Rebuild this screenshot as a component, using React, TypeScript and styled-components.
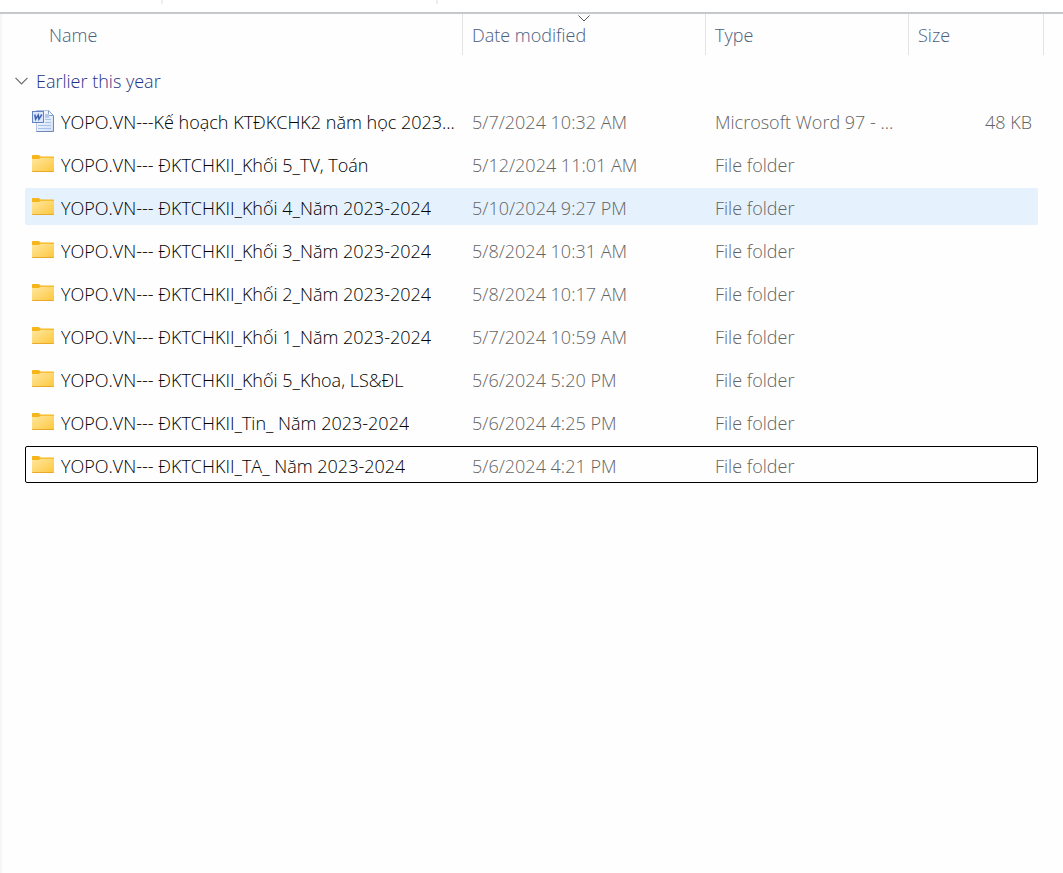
import React, { useState } from "react";
import styled, { createGlobalStyle } from "styled-components";

const GlobalStyle = createGlobalStyle`
  *, *::before, *::after { box-sizing: border-box; }
  body {
    margin: 0;
    background: #fefefe;
    font-family: "Open Sans", "Segoe UI", sans-serif;
    font-size: 18px;
    font-weight: 330;
    line-height: 24px;
    color: #000;
  }
`;

const Page = styled.div`
  display: flex;
  flex-direction: column;
  min-height: 100vh;
`;

const ToolbarEdge = styled.div`
  display: flex;
  align-items: flex-start;
  height: 14px;
  padding-left: 161px;
  gap: 273px;
  background: #fff;
  border-bottom: 2px solid #c5c9cb;
`;

const ToolbarDivider = styled.span`
  width: 2px;
  height: 4px;
  background: #ededee;
`;

const Pane = styled.main`
  flex: 1;
  border-left: 2px solid #f6f6f6;
`;

const FileTable = styled.table`
  display: block;
  width: 100%;
`;

const Head = styled.thead`
  display: block;
`;

const Body = styled.tbody`
  display: flex;
  flex-direction: column;
  gap: 6px;
`;

const HeadRow = styled.tr`
  display: grid;
  grid-template-columns: minmax(0, 1fr) 243px 203px 135px;
  margin-right: 19px;
`;

const HeadCell = styled.th<{ $indent?: boolean }>`
  position: relative;
  height: 41px;
  padding: 9px 9px 0 ${(p) => (p.$indent ? 47 : 9)}px;
  border-right: 1px solid #e3e3e3;
  text-align: left;
  font-weight: inherit;
`;

const HeadButton = styled.button`
  display: block;
  padding: 0;
  border: 0;
  background: none;
  font: inherit;
  color: #4a607e;
`;

const SortMark = styled.svg`
  position: absolute;
  top: 1px;
  left: 50%;
  margin-left: -6px;
`;

const GroupRow = styled.tr`
  display: block;
  padding: 14px 0 3px 13px;
`;

const GroupCell = styled.th`
  display: block;
  padding: 0;
  text-align: left;
  font-weight: inherit;
`;

const GroupButton = styled.button`
  display: flex;
  align-items: center;
  gap: 8px;
  padding: 0;
  border: 0;
  background: none;
  font: inherit;
  color: #1e3287;
`;

const FileRow = styled.tr<{ $state?: "hover" | "focus" }>`
  display: grid;
  grid-template-columns: minmax(0, 1fr) 243px 203px 129px;
  height: 37px;
  margin: 0 25px 0 23px;
  border: 1px solid ${(p) => (p.$state === "focus" ? "#000" : "transparent")};
  border-radius: 2px;
  background: ${(p) => (p.$state === "hover" ? "#e5f2fd" : "none")};
`;

const Cell = styled.td<{ $end?: boolean }>`
  padding: 7px ${(p) => (p.$end ? 5 : 9)}px 0 10px;
  overflow: hidden;
  white-space: nowrap;
  text-overflow: ellipsis;
  text-align: ${(p) => (p.$end ? "right" : "left")};
  color: #636363;
`;

const NameCell = styled.td`
  display: flex;
  align-items: flex-start;
  gap: 7px;
  padding: 6px 0 0 6px;
`;

const FileName = styled.span`
  padding-top: 1px;
  overflow: hidden;
  white-space: nowrap;
  text-overflow: ellipsis;
`;

const Glyph = styled.svg`
  flex: none;
  display: block;
`;

function FolderIcon() {
  return (
    <Glyph width="22" height="23" viewBox="0 0 22 23" aria-hidden="true">
      <path d="M0 3.5Q0 3 .6 3H6.4Q7 3 7.5 3.5L8.6 4.6H21.4Q22 4.6 22 5.2V8H0Z" fill="#f5b51b" />
      <path d="M0 7H6.4Q7 7 7.6 6.5L8.5 5.8H21.2Q22 5.8 22 6.6V19.4Q22 20 21.4 20H.6Q0 20 0 19.4Z" fill="url(#folderFace)" />
      <path d="M.3 19.5H21.7" stroke="#eba92c" />
    </Glyph>
  );
}

function WordIcon() {
  return (
    <Glyph width="22" height="23" viewBox="0 0 22 23" aria-hidden="true">
      <path d="M4.5 1.5H16.5L21.5 6.5V22.5H4.5Z" fill="url(#docPage)" stroke="#b3c4e2" />
      <path d="M16.5 1.5V6.5H21.5Z" fill="#f8fbff" stroke="#8aa1ca" strokeLinejoin="round" />
      <path d="M4.5 22.5H21.5V7" fill="none" stroke="#7089b8" />
      <rect x="13" y="5" width="4" height="4" fill="#b4c9ee" />
      <path d="M13 10.5h6M13 13.5h6M6 16.5h13M6 19.5h13" stroke="#a9c0e8" />
      <rect x=".5" y="2.5" width="11" height="11" fill="#dce7fa" stroke="#6583c3" />
      <path d="M2.8 5.5 3.6 10.2 6.2 6 6.9 10.2 9.8 5.5" fill="none" stroke="#3e63b5" strokeWidth="1.5" />
    </Glyph>
  );
}

type Entry = {
  name: string;
  date: string;
  type: string;
  size?: string;
  word?: boolean;
  state?: "hover" | "focus";
};

const entries: Entry[] = [
  { name: "YOPO.VN---Kế hoạch KTĐKCHK2 năm học 2023...", date: "5/7/2024 10:32 AM", type: "Microsoft Word 97 - ...", size: "48 KB", word: true },
  { name: "YOPO.VN--- ĐKTCHKII_Khối 5_TV, Toán", date: "5/12/2024 11:01 AM", type: "File folder" },
  { name: "YOPO.VN--- ĐKTCHKII_Khối 4_Năm 2023-2024", date: "5/10/2024 9:27 PM", type: "File folder", state: "hover" },
  { name: "YOPO.VN--- ĐKTCHKII_Khối 3_Năm 2023-2024", date: "5/8/2024 10:31 AM", type: "File folder" },
  { name: "YOPO.VN--- ĐKTCHKII_Khối 2_Năm 2023-2024", date: "5/8/2024 10:17 AM", type: "File folder" },
  { name: "YOPO.VN--- ĐKTCHKII_Khối 1_Năm 2023-2024", date: "5/7/2024 10:59 AM", type: "File folder" },
  { name: "YOPO.VN--- ĐKTCHKII_Khối 5_Khoa, LS&ĐL", date: "5/6/2024 5:20 PM", type: "File folder" },
  { name: "YOPO.VN--- ĐKTCHKII_Tin_ Năm 2023-2024", date: "5/6/2024 4:25 PM", type: "File folder" },
  { name: "YOPO.VN--- ĐKTCHKII_TA_ Năm 2023-2024", date: "5/6/2024 4:21 PM", type: "File folder", state: "focus" },
];

export default function App() {
  const [open, setOpen] = useState(true);

  return (
    <Page>
      <GlobalStyle />
      <ToolbarEdge>
        <ToolbarDivider />
        <ToolbarDivider />
      </ToolbarEdge>
      <Pane>
        <FileTable>
          <Head>
            <HeadRow>
              <HeadCell scope="col" $indent>
                <HeadButton>Name</HeadButton>
              </HeadCell>
              <HeadCell scope="col" aria-sort="descending">
                <SortMark width="12" height="7" viewBox="0 0 12 7" aria-hidden="true">
                  <path d="M.5 .5 6 6 11.5 .5" fill="none" stroke="#5c5c5c" />
                </SortMark>
                <HeadButton>Date modified</HeadButton>
              </HeadCell>
              <HeadCell scope="col">
                <HeadButton>Type</HeadButton>
              </HeadCell>
              <HeadCell scope="col">
                <HeadButton>Size</HeadButton>
              </HeadCell>
            </HeadRow>
          </Head>
          <Body>
            <GroupRow>
              <GroupCell colSpan={4} scope="rowgroup">
                <GroupButton aria-expanded={open} onClick={() => setOpen(!open)}>
                  <Glyph width="13" height="8" viewBox="0 0 13 8" aria-hidden="true">
                    <path d="M.5 .8 6.5 6.8 12.5 .8" fill="none" stroke="#6b6b6b" strokeWidth="1.2" />
                  </Glyph>
                  Earlier this year
                </GroupButton>
              </GroupCell>
            </GroupRow>
            {open &&
              entries.map((e) => (
                <FileRow key={e.name} $state={e.state}>
                  <NameCell>
                    {e.word ? <WordIcon /> : <FolderIcon />}
                    <FileName>{e.name}</FileName>
                  </NameCell>
                  <Cell>{e.date}</Cell>
                  <Cell>{e.type}</Cell>
                  <Cell $end>{e.size}</Cell>
                </FileRow>
              ))}
          </Body>
        </FileTable>
      </Pane>
      <svg width="0" height="0" aria-hidden="true" display="block">
        <defs>
          <linearGradient id="folderFace" x1="0" y1="0" x2="1" y2="1">
            <stop offset="0" stopColor="#ffe7a0" />
            <stop offset="1" stopColor="#fdc73c" />
          </linearGradient>
          <linearGradient id="docPage" x1="0" y1="0" x2="1" y2="1">
            <stop offset="0" stopColor="#ffffff" />
            <stop offset="1" stopColor="#cfdff8" />
          </linearGradient>
        </defs>
      </svg>
    </Page>
  );
}
